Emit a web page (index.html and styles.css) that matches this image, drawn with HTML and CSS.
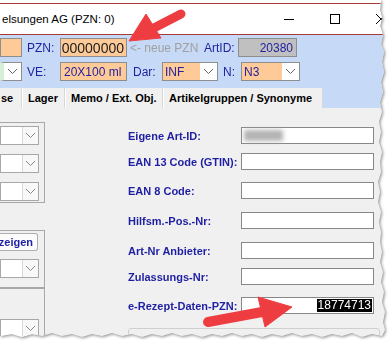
FILE: index.html
```html
<!DOCTYPE html>
<html>
  <head>
    <title>Artikel</title>
    <link rel="stylesheet" href="styles.css">
  </head>
  <body>
    <div class="paper">
      <div class="shadow">
        <div class="window">
          <div class="titlebar">
            <div class="bar">
              <span class="title">elsungen AG (PZN: 0)</span>
              <div class="controls">
                <span class="ctl"><i class="min"></i></span>
                <span class="ctl"><i class="max"></i></span>
                <span class="ctl"><svg width="10" height="10"><path d="M0 0L10 10M10 0L0 10" stroke="#000" stroke-width="1"/></svg></span>
              </div>
            </div>
          </div>

          <div class="head">
            <div class="hrow">
              <span class="fld orange stub"></span>
              <span class="lbl w-pzn">PZN:</span>
              <span class="fld orange pzn">00000000</span>
              <span class="hint">&lt;- neue PZN</span>
              <span class="lbl w-art">ArtID:</span>
              <span class="fld grey artid">20380</span>
            </div>
            <div class="hrow second">
              <span class="combo stub-combo"><span class="drop"><svg width="9" height="5"><polyline points="0,0 4.5,4.5 9,0" fill="none" stroke="#666"/></svg></span></span>
              <span class="lbl w-pzn">VE:</span>
              <span class="fld orange ve">20X100 ml</span>
              <span class="lbl w-dar">Dar:</span>
              <span class="combo orange dar"><span class="val">INF</span><span class="drop"><svg width="9" height="5"><polyline points="0,0 4.5,4.5 9,0" fill="none" stroke="#666"/></svg></span></span>
              <span class="lbl w-n">N:</span>
              <span class="combo orange nn"><span class="val">N3</span><span class="drop"><svg width="9" height="5"><polyline points="0,0 4.5,4.5 9,0" fill="none" stroke="#666"/></svg></span></span>
            </div>
          </div>

          <div class="tabs">
            <span class="tab t1">se</span>
            <span class="tab t2">Lager</span>
            <span class="tab t3">Memo / Ext. Obj.</span>
            <span class="tab t4">Artikelgruppen / Synonyme</span>
          </div>

          <div class="content">
            <div class="left">
              <div class="frame f1">
                <span class="combo lc"><span class="drop"><svg width="9" height="5"><polyline points="0,0 4.5,4.5 9,0" fill="none" stroke="#888"/></svg></span></span>
                <span class="combo lc"><span class="drop"><svg width="9" height="5"><polyline points="0,0 4.5,4.5 9,0" fill="none" stroke="#888"/></svg></span></span>
                <span class="combo lc"><span class="drop"><svg width="9" height="5"><polyline points="0,0 4.5,4.5 9,0" fill="none" stroke="#888"/></svg></span></span>
              </div>
              <div class="frame f2">
                <span class="btn">zeigen</span>
                <span class="combo lc"><span class="drop"><svg width="9" height="5"><polyline points="0,0 4.5,4.5 9,0" fill="none" stroke="#888"/></svg></span></span>
              </div>
              <div class="frame f3">
                <span class="combo lc"><span class="drop"><svg width="9" height="5"><polyline points="0,0 4.5,4.5 9,0" fill="none" stroke="#888"/></svg></span></span>
              </div>
            </div>

            <div class="form">
              <div class="frow">
                <span class="flbl">Eigene Art-ID:</span>
                <span class="inp"><span class="blur"></span></span>
              </div>
              <div class="frow tight">
                <span class="flbl">EAN 13 Code (GTIN):</span>
                <span class="inp"></span>
              </div>
              <div class="frow">
                <span class="flbl">EAN 8 Code:</span>
                <span class="inp"></span>
              </div>
              <div class="frow loose">
                <span class="flbl">Hilfsm.-Pos.-Nr:</span>
                <span class="inp"></span>
              </div>
              <div class="frow loose">
                <span class="flbl">Art-Nr Anbieter:</span>
                <span class="inp"></span>
              </div>
              <div class="frow tight">
                <span class="flbl">Zulassungs-Nr:</span>
                <span class="inp"></span>
              </div>
              <div class="frow">
                <span class="flbl">e-Rezept-Daten-PZN:</span>
                <span class="inp right"><span class="sel">18774713</span></span>
              </div>
              <div class="extbox"></div>
            </div>
          </div>
        </div>
      </div>

      <svg class="arrows" width="390" height="341">
        <g fill="#ee3d40" stroke="#ee3d40">
          <line x1="181" y1="14" x2="150" y2="30" stroke-width="9" stroke-linecap="round"/>
          <polygon points="129,41 146,14 161,38" stroke-width="1" stroke-linejoin="round"/>
          <line x1="208" y1="322" x2="262" y2="312" stroke-width="10" stroke-linecap="round"/>
          <polygon points="292,307 258,297 265,327" stroke-width="1" stroke-linejoin="round"/>
        </g>
      </svg>
    </div>
  </body>
</html>
```

FILE: styles.css
```css
body {
  margin: 0;
  background: #fff;
  font-family: "Liberation Sans", Arial, sans-serif;
  overflow: hidden;
}
.paper {
  position: relative;
  width: 390px;
  height: 341px;
  overflow: hidden;
}
.shadow {
  filter: drop-shadow(1px 1px 1.5px rgba(0, 0, 0, 0.45));
}
.window {
  width: 390px;
  height: 341px;
  background: #f0f0f0;
  clip-path: polygon(0 0, 381px 0, 380px 10px, 382px 18px, 380px 26px, 383px 35px, 381px 44px, 384px 52px, 382px 62px, 384px 72px, 381px 82px, 383px 92px, 380px 102px, 382px 112px, 379px 122px, 381px 132px, 379px 142px, 382px 152px, 380px 162px, 381px 172px, 378px 182px, 380px 192px, 378px 202px, 381px 212px, 379px 222px, 381px 232px, 380px 242px, 382px 252px, 380px 262px, 383px 272px, 381px 282px, 384px 292px, 382px 302px, 385px 312px, 383px 322px, 385px 330px, 382px 336px, 372px 334px, 362px 337px, 352px 333px, 342px 336px, 332px 334px, 322px 337px, 312px 334px, 302px 336px, 292px 333px, 282px 336px, 272px 334px, 262px 337px, 252px 334px, 242px 336px, 232px 333px, 222px 336px, 212px 334px, 202px 337px, 192px 334px, 182px 336px, 172px 333px, 162px 336px, 152px 334px, 142px 337px, 132px 334px, 122px 336px, 112px 333px, 102px 336px, 92px 334px, 82px 337px, 72px 334px, 62px 336px, 52px 333px, 42px 336px, 32px 334px, 22px 337px, 12px 334px, 0 336px);
}

/* title bar */
.titlebar {
  height: 35px;
  padding-top: 3px;
  box-sizing: border-box;
  background: #fff;
}
.bar {
  height: 32px;
  box-sizing: border-box;
  border-top: 1px solid #a83a3a;
  border-bottom: 1px solid #a83a3a;
  display: flex;
  align-items: center;
}
.title {
  flex: 1;
  padding-left: 2px;
  font-size: 11.5px;
  color: #000;
}
.controls {
  display: flex;
  width: 138px;
  margin-right: -14px;
}
.ctl {
  width: 46px;
  height: 30px;
  display: flex;
  align-items: center;
  justify-content: center;
}
.min {
  width: 10px;
  height: 1px;
  background: #000;
}
.max {
  width: 8px;
  height: 8px;
  border: 1px solid #000;
}

/* header fields */
.head {
  background: #c6d9f6;
  padding: 3px 0 7px;
}
.hrow {
  display: flex;
  align-items: center;
  height: 19px;
}
.hrow.second {
  margin-top: 5px;
}
.fld, .combo {
  box-sizing: border-box;
  height: 19px;
  border: 1px solid #8e8e8e;
  font-size: 12px;
  color: #1f1f9f;
  display: flex;
  align-items: center;
}
.orange {
  background: #fdca98;
}
.grey {
  background: #c0c0c0;
}
.stub {
  width: 22px;
}
.lbl {
  font-size: 12px;
  color: #1f1f9f;
  margin-left: 5px;
}
.w-pzn { width: 33px; }
.w-art { width: 34px; margin-left: 0; }
.w-dar { width: 29px; margin-left: 6px; }
.w-n { width: 18px; }
.pzn {
  width: 67px;
  justify-content: flex-end;
  padding-right: 2px;
  font-size: 14px;
  color: #222;
}
.hint {
  width: 74px;
  margin-left: 3px;
  font-size: 12px;
  color: #a0a0a0;
  white-space: nowrap;
}
.artid {
  width: 59px;
  justify-content: flex-end;
  padding-right: 3px;
}
.ve {
  width: 67px;
  padding-left: 3px;
}
.val {
  flex: 1;
  padding-left: 2px;
}
.drop {
  width: 17px;
  height: 17px;
  background: #fff;
  display: flex;
  align-items: center;
  justify-content: center;
}
.stub-combo {
  width: 22px;
  background: #fff;
  border-left: 4px solid #d6efd6;
  justify-content: flex-end;
}
.dar { width: 56px; }
.nn { width: 59px; }

/* tabs */
.tabs {
  height: 20px;
  background: #c6d9f6;
  display: flex;
}
.tab {
  box-sizing: border-box;
  height: 20px;
  background: #f0f0f0;
  border-right: 1px solid #d8d8d8;
  border-left: 1px solid #fff;
  font-size: 11px;
  font-weight: bold;
  color: #000;
  display: flex;
  align-items: center;
  white-space: nowrap;
}
.t1 { width: 22px; padding-left: 1px; border-left: none; }
.t2 { width: 43px; padding-left: 5px; }
.t3 { width: 98px; padding-left: 5px; }
.t4 { width: 160px; padding-left: 5px; }

/* content */
.content {
  display: flex;
}
.left {
  width: 45px;
  flex-shrink: 0;
}
.frame {
  width: 44px;
  border: 1px solid #a8a8a8;
  border-left: none;
  display: flex;
  flex-direction: column;
}
.f1 {
  margin-top: 14px;
  padding-top: 3px;
  height: 76px;
}
.f2 {
  margin-top: 27px;
  padding-top: 2px;
  height: 54px;
}
.f3 {
  margin-top: 0;
  padding-top: 30px;
  height: 60px;
}
.lc {
  width: 39px;
  background: #fff;
  border-color: #a8a8a8;
  justify-content: flex-end;
  margin-bottom: 9px;
}
.lc .drop {
  width: 16px;
  border-left: 1px solid #d8d8d8;
  box-sizing: border-box;
  background: #f8f8f8;
}
.btn {
  box-sizing: border-box;
  width: 38px;
  height: 19px;
  margin-bottom: 8px;
  border: 1px solid #adadad;
  border-left: none;
  border-radius: 0 3px 3px 0;
  background: #fbfbfb;
  font-size: 11px;
  font-weight: bold;
  color: #1f1fa8;
  display: flex;
  align-items: center;
  justify-content: flex-end;
  padding-right: 4px;
  white-space: nowrap;
}

.form {
  margin-left: 83px;
  padding-top: 19px;
}
.frow {
  display: flex;
  align-items: center;
  height: 17px;
  margin-top: 12px;
}
.frow:first-child { margin-top: 0; }
.frow.tight { margin-top: 9px; }
.frow.loose { margin-top: 13px; }
.flbl {
  width: 113px;
  font-size: 11px;
  font-weight: bold;
  color: #1f1fa3;
  white-space: nowrap;
}
.inp {
  box-sizing: border-box;
  width: 133px;
  height: 17px;
  background: #fff;
  border: 1px solid #878787;
  display: flex;
  align-items: center;
}
.inp.right {
  justify-content: flex-end;
  padding-right: 1px;
}
.blur {
  width: 39px;
  height: 11px;
  margin-left: 2px;
  background: #b4b4b4;
  filter: blur(2px);
}
.sel {
  background: #000;
  color: #fff;
  font-size: 12px;
  padding: 0 1px;
  line-height: 13px;
}
.extbox {
  margin-top: 14px;
  width: 250px;
  height: 20px;
  border: 1px solid #cfcfcf;
  border-radius: 3px;
}

.arrows {
  position: absolute;
  left: 0;
  top: 0;
}
```
